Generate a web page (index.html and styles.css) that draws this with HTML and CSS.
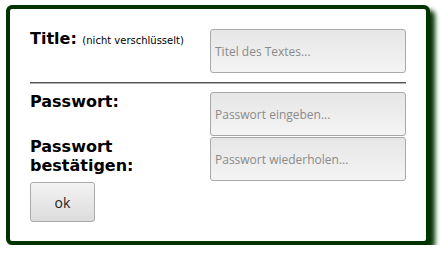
FILE: index.html
```html
<!DOCTYPE html>
<html lang="de">
<head>
    <meta charset="UTF-8">
    <title>Verschlüsseln</title>
    <link rel="stylesheet" href="styles.css">
</head>
<body>
    <div class="crypt-panel">
        <div class="crypt-row">
            <div class="crypt-label">Title: <small>(nicht verschlüsselt)</small></div>
            <input class="crypt-input" type="text" placeholder="Titel des Textes...">
        </div>

        <hr class="crypt-sep">

        <div class="crypt-row">
            <div class="crypt-label">Passwort:</div>
            <input class="crypt-input" type="password" placeholder="Passwort eingeben...">
        </div>
        <div class="crypt-row">
            <div class="crypt-label">Passwort<br>bestätigen:</div>
            <input class="crypt-input" type="password" placeholder="Passwort wiederholen...">
        </div>

        <button class="crypt-ok">ok</button>
    </div>
</body>
</html>
```

FILE: styles.css
```css
body {
    margin: 0;
    background: #fff;
    font-family: "DejaVu Sans", Verdana, sans-serif;
}

.crypt-panel {
    margin: 5px 0 0 6px;
    width: 376px;
    padding: 20px 20px 19px 20px;
    border: 4px solid #003300;
    border-radius: 6px;
    background: #fff;
    box-shadow: 5px 5px 5px #003300;
}

.crypt-row {
    display: grid;
    grid-template-columns: 180px 196px;
    margin-bottom: 1px;
}

.crypt-label {
    font-size: 16px;
    font-weight: bold;
    color: #000;
}

.crypt-label small {
    font-size: 10px;
    font-weight: normal;
}

.crypt-input {
    box-sizing: border-box;
    height: 44px;
    width: 196px;
    margin: 0;
    padding: 0 4px;
    border: 1px solid #a8a8a8;
    border-radius: 3px;
    background: linear-gradient(#e6e6e6, #f4f4f4);
    font-family: "Open Sans", sans-serif;
    font-size: 12px;
    color: #333;
}

.crypt-input::placeholder {
    color: #8a8a8a;
}

.crypt-sep {
    margin: 9px 0 8px 0;
    border: none;
    border-top: 1px solid #555;
    border-bottom: 1px solid #b0b0b0;
}

.crypt-ok {
    display: block;
    box-sizing: border-box;
    width: 65px;
    height: 40px;
    margin: 0;
    border: 1px solid #aaa;
    border-radius: 3px;
    background: linear-gradient(#f3f3f3, #dcdcdc);
    font-family: "Open Sans", sans-serif;
    font-size: 14px;
    color: #222;
}
```
